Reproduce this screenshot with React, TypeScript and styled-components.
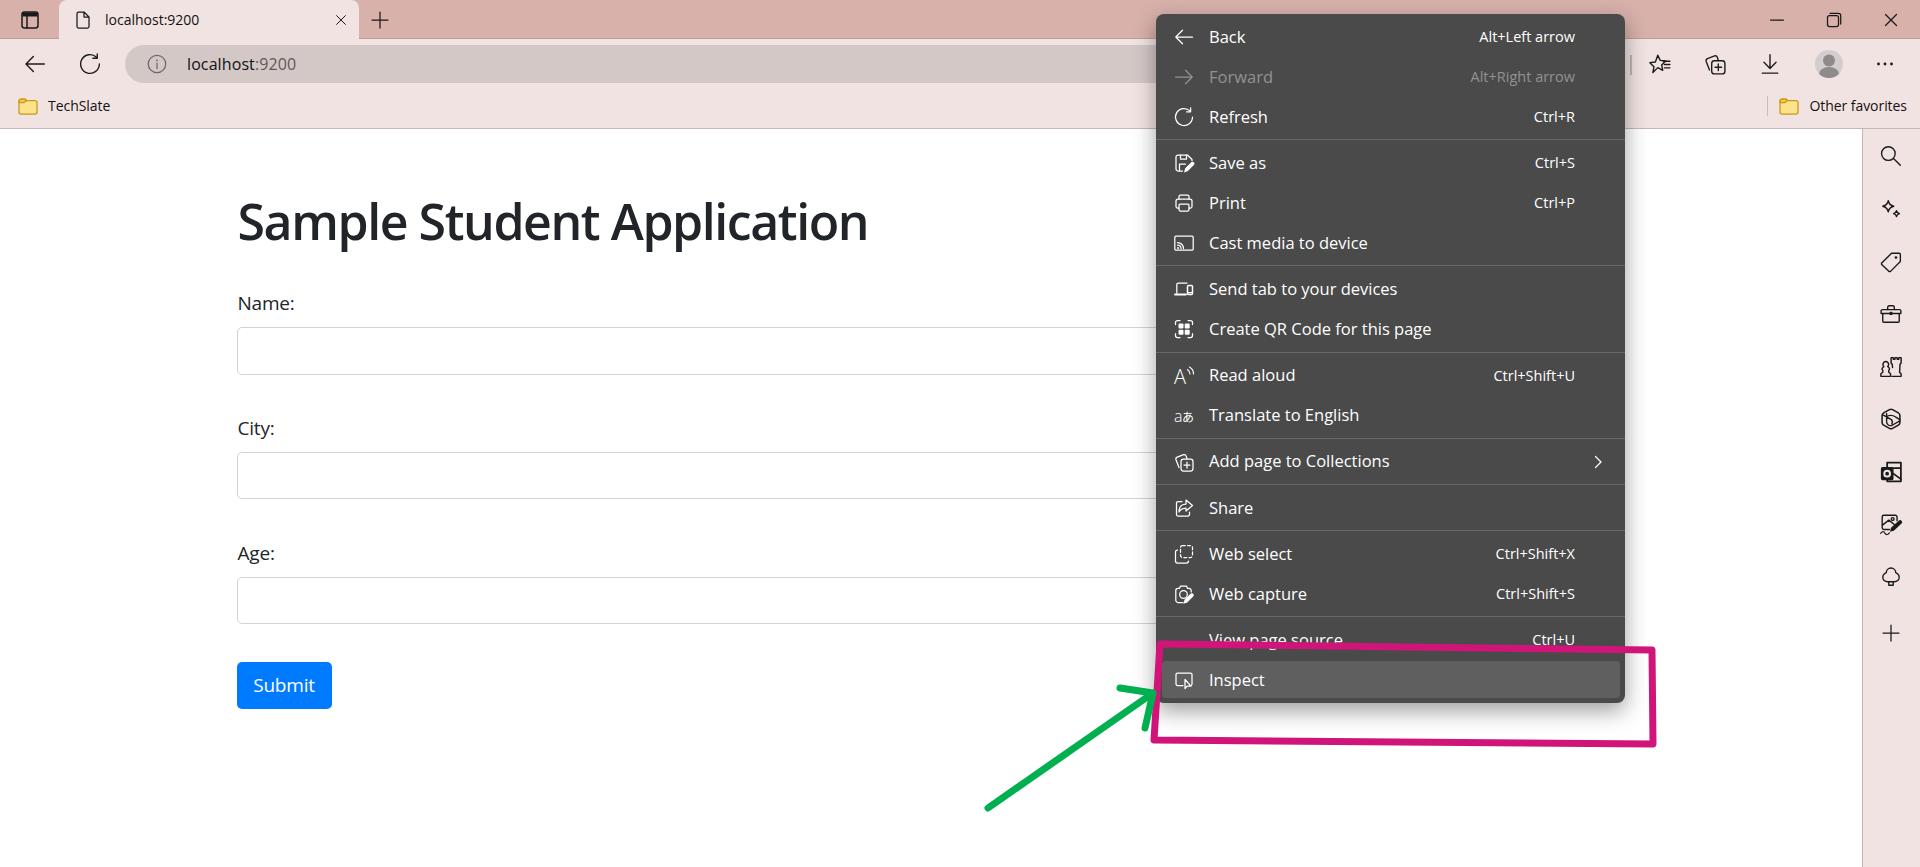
import React from 'react';
import styled, { createGlobalStyle } from 'styled-components';

const GlobalStyle = createGlobalStyle`
    html, body {
        margin: 0;
        padding: 0;
        background: #fff;
        font-family: "Open Sans", "Noto Sans", "Liberation Sans", sans-serif;
    }
    * { box-sizing: border-box; }
`

const Browser = styled.div`
    position: relative;
    width: 1920px;
    height: 867px;
    overflow: hidden;
    display: flex;
    flex-direction: column;
    color: #1a1a1a;
`

const TitleBar = styled.div`
    height: 39px;
    flex: none;
    display: flex;
    align-items: flex-end;
    background: #d7b1aa;
    box-shadow: inset 0 -1px 0 #bf9d97;
`
const TabToggle = styled.div`
    width: 59px;
    height: 39px;
    display: flex;
    align-items: center;
    justify-content: center;
`
const Tab = styled.div`
    width: 300px;
    height: 39px;
    padding: 0 10px 0 14px;
    display: flex;
    align-items: center;
    background: #f1e3e2;
    border-radius: 8px 8px 0 0;
`
const TabTitle = styled.span`
    flex: 1;
    margin-left: 12px;
    font-size: 14px;
    color: #111;
`
const NewTab = styled.div`
    width: 42px;
    height: 39px;
    display: flex;
    align-items: center;
    justify-content: center;
`
const WindowControls = styled.div`
    margin-left: auto;
    padding-right: 1px;
    display: flex;
`
const WindowButton = styled.div`
    width: 57px;
    height: 39px;
    display: flex;
    align-items: center;
    justify-content: center;
`

const Toolbar = styled.div`
    height: 45px;
    flex: none;
    padding: 6px 15px 0;
    display: flex;
    align-items: flex-start;
    gap: 15px;
    background: #f1e3e2;
`
const ToolButton = styled.div<{ $shift?: number }>`
    width: 40px;
    height: 38px;
    flex: none;
    margin-left: ${p => p.$shift || 0}px;
    display: flex;
    align-items: center;
    justify-content: center;
`
const AddressBar = styled.div`
    flex: 1;
    height: 38px;
    padding-left: 22px;
    display: flex;
    align-items: center;
    gap: 20px;
    background: #d4c8c7;
    border-radius: 19px 0 0 19px;
`
const AddressInfo = styled.div`
    color: #6d6766;
`
const AddressText = styled.span`
    font-size: 16px;
    letter-spacing: 0.1px;
    color: #111;
    span { color: #5d5757; }
`
const ToolSeparator = styled.div`
    width: 2px;
    height: 20px;
    flex: none;
    align-self: center;
    margin: 0 -7px 0 -8px;
    background: #c2b5b5;
`
const Avatar = styled.div`
    width: 28px;
    height: 28px;
    border-radius: 50%;
    background: #d3cecd;
    overflow: hidden;
    display: flex;
`

const BookmarksBar = styled.div`
    height: 45px;
    flex: none;
    padding: 0 13px 1px 18px;
    display: flex;
    align-items: center;
    background: #f1e3e2;
    border-bottom: 1px solid #c6b6b5;
`
const Bookmark = styled.div`
    display: flex;
    align-items: center;
    gap: 10px;
    font-size: 14px;
    letter-spacing: -0.05px;
    color: #111;
`
const BookmarkSeparator = styled.div`
    width: 1px;
    height: 20px;
    margin: 0 11px 0 auto;
    background: #c9bcbb;
`

const Body = styled.div`
    flex: 1;
    display: flex;
    min-height: 0;
`
const Content = styled.main`
    flex: 1;
    background: #fff;
`
const Container = styled.div`
    width: 1425px;
    margin: 0 auto;
    padding: 62px 19px 0 18px;
    color: #212529;
`
const Heading = styled.h1`
    margin: 0 0 37px 1px;
    font-size: 50px;
    line-height: 60px;
    font-weight: 600;
    letter-spacing: -1.42px;
`
const Field = styled.div`
    margin-bottom: 38.4px;
`
const FieldLabel = styled.label`
    display: block;
    width: fit-content;
    margin: 0 0 9px 1px;
    font-size: 19px;
    line-height: 30px;
    letter-spacing: -0.2px;
`
const TextInput = styled.input`
    display: block;
    width: 100%;
    height: 47.5px;
    border: 1px solid #ced4da;
    border-radius: 5px;
    background: #fff;
`
const SubmitButton = styled.button`
    width: 95px;
    height: 47px;
    margin-top: -1px;
    padding: 0;
    border: 0;
    border-radius: 5px;
    background: #007bff;
    color: #fff;
    font-family: inherit;
    font-size: 19px;
    letter-spacing: -0.2px;
`

const Sidebar = styled.aside`
    width: 58px;
    flex: none;
    padding: 1px 2px 0 0;
    display: flex;
    flex-direction: column;
    align-items: center;
    background: #f1e3e2;
    border-left: 1px solid #c6b6b5;
`
const SideButton = styled.div<{ $extra?: number }>`
    width: 40px;
    height: 52.6px;
    flex: none;
    margin-top: ${p => p.$extra || 0}px;
    display: flex;
    align-items: center;
    justify-content: center;
`

const Menu = styled.div`
    position: absolute;
    left: 1156px;
    top: 14px;
    width: 469px;
    height: 689px;
    background: #4a4a4a;
    border-radius: 8px;
    box-shadow: 0 8px 22px rgba(0, 0, 0, 0.38);
    color: #fff;
`
const MenuGroup = styled.div`
    padding: 3px 0 2.2px;
    & + & { border-top: 1px solid #676767; }
`
const MenuRow = styled.div<{ $disabled?: boolean; $active?: boolean }>`
    height: 40px;
    position: relative;
    display: flex;
    align-items: center;
    padding-left: 18px;
    padding-right: 50px;
    color: ${p => (p.$disabled ? '#929292' : '#fff')};
    &::before {
        content: '';
        position: absolute;
        display: ${p => (p.$active ? 'block' : 'none')};
        inset: 1px 5px 2px 6px;
        background: #5f5f5f;
        border-radius: 4px;
    }
`
const MenuIcon = styled.div`
    position: relative;
    width: 20px;
    height: 20px;
    margin-right: 15px;
    flex: none;
`
const MenuLabel = styled.span`
    position: relative;
    flex: 1;
    margin-top: -1.6px;
    font-size: 16.5px;
`
const Shortcut = styled.span`
    position: relative;
    margin-top: -1px;
    font-size: 14.5px;
`
const Chevron = styled.div`
    position: absolute;
    right: 17px;
    top: 10px;
    width: 20px;
    height: 20px;
`

const Annotation = styled.svg`
    position: absolute;
    left: 0;
    top: 0;
    width: 1920px;
    height: 867px;
    pointer-events: none;
`

const Glyph = styled.svg<{ $w?: number }>`
    display: block;
    overflow: visible;
    width: ${p => p.$w || 20}px;
    height: ${p => p.$w || 20}px;
    fill: none;
    stroke: currentColor;
    stroke-width: 1.25;
    stroke-linecap: round;
    stroke-linejoin: round;
`

const Solid = { fill: 'currentColor', stroke: 'none' }

const icons: Record<string, React.ReactNode> = {
  back: <path d="M18.5 10H2M8.5 3.2 1.8 10l6.7 6.8" />,
  forward: <path d="M1.5 10H18M11.5 3.2l6.7 6.8-6.7 6.8" />,
  refresh: (
    <>
      <path d="M18.5 10a8.5 8.5 0 1 1-2.6-6.1" />
      <path d="M16.6 .8v4h-4" />
    </>
  ),
  save: (
    <>
      <path d="M8.5 18H4a2 2 0 0 1-2-2V4a2 2 0 0 1 2-2h9.5L18 6.5v1.2" />
      <path d="M6.5 2v4h6V2M5.5 17.5V11h6" />
      <path {...Solid} d="M10 19.5l1.2-4.2 6-6a1.9 1.9 0 0 1 2.7 2.7l-6 6z" />
    </>
  ),
  print: (
    <>
      <path d="M5 6V3.5A1.5 1.5 0 0 1 6.5 2h7A1.5 1.5 0 0 1 15 3.5V6" />
      <path d="M5 15H3.500A1.500 1.500 0 0 1 2 13.500V8a2 2 0 0 1 2-2h12a2 2 0 0 1 2 2v5.500a1.500 1.500 0 0 1-1.500 1.500H15" />
      <rect x="5" y="11" width="10" height="7" rx="1.2" />
    </>
  ),
  cast: (
    <>
      <rect x=".8" y="3" width="18.400" height="14" rx="1" />
      <path d="M3.500 9.500a6 6 0 0 1 6 6M3.500 12a3.500 3.500 0 0 1 3.500 3.500" />
      <circle {...Solid} cx="4" cy="15" r="1" />
    </>
  ),
  devices: (
    <>
      <path d="M2.800 14V5.500A1.500 1.500 0 0 1 4.300 4H13" />
      <path d="M1 15.500h11" strokeWidth="1.8" />
      <rect x="13.500" y="6.500" width="5" height="9" rx="1" strokeWidth="1.5" />
      <path d="M14 13.500h4" />
    </>
  ),
  qr: (
    <>
      <path d="M1.500 5.500V3.500a2 2 0 0 1 2-2h2.500M14 1.500h2.500a2 2 0 0 1 2 2v2M18.500 14.500v2a2 2 0 0 1-2 2H14M6 18.500H3.500a2 2 0 0 1-2-2v-2" />
      <rect {...Solid} x="4.500" y="4.500" width="5" height="5" rx="1" />
      <rect {...Solid} x="10.700" y="4.500" width="5" height="5" rx="1" />
      <rect {...Solid} x="4.500" y="10.700" width="5" height="5" rx="1" />
      <rect {...Solid} x="10.700" y="10.700" width="5" height="5" rx="1" />
    </>
  ),
  read: (
    <>
      <text x="0" y="17.500" fontFamily="Open Sans, sans-serif" fontSize="20" fontWeight="300" fill="currentColor" stroke="none">A</text>
      <path d="M13.500 3.500a6 6 0 0 1 2.500 4.500M15.500 1a8 8 0 0 1 4 7" strokeWidth="1.1" />
    </>
  ),
  translate: (
    <text x="0" y="15.500" fontFamily="Noto Sans CJK JP, sans-serif" fill="currentColor" stroke="none">
      <tspan fontSize="16" fontWeight="300" fontFamily="Open Sans, sans-serif">a</tspan>
      <tspan fontSize="12" dx="-.5">あ</tspan>
    </text>
  ),
  collections: (
    <>
      <path d="M5 15.500 2 7.700a2 2 0 0 1 1.200-2.500L9.600 2.700a2 2 0 0 1 2.500 1.200L13 6.800" />
      <rect x="7" y="7" width="12" height="12" rx="2.500" />
      <path d="M13 10v6M10 13h6" />
    </>
  ),
  share: (
    <>
      <path d="M8 3.500H4A1.500 1.500 0 0 0 2.500 5v11.500A1.500 1.500 0 0 0 4 18h10a1.500 1.500 0 0 0 1.500-1.500V14" />
      <path d="M12 2l6.500 5.500L12 13v-3c-3.500 0-5.500 1-7 4 0-5 2.500-8 7-8z" />
    </>
  ),
  select: (
    <>
      <rect x="6.500" y="1.500" width="12" height="12" rx="2" strokeDasharray="2.800 2.300" />
      <path d="M3.500 6A2 2 0 0 0 1.500 8v9a2 2 0 0 0 2 2h9a2 2 0 0 0 2-2" />
    </>
  ),
  capture: (
    <>
      <path d="M9 18.500H4a2.200 2.200 0 0 1-2.200-2.200V6.500A2.200 2.200 0 0 1 4 4.300h1.500l1-2.300h6l1 2.300H15a2.200 2.200 0 0 1 2.200 2.200V8" />
      <circle cx="9.500" cy="10.500" r="3.800" />
      <path {...Solid} d="M9.500 19.800l1-4 6-6a1.900 1.900 0 0 1 2.700 2.700l-6 6z" />
    </>
  ),
  inspect: (
    <>
      <path d="M9 15.500H3.500A1.500 1.500 0 0 1 2 14V4.500A1.500 1.500 0 0 1 3.500 3h13A1.500 1.500 0 0 1 18 4.500V14a1.500 1.500 0 0 1-.8 1.300" />
      <path d="M11 9.500v9l2.200-2.400 3.800.1z" />
    </>
  ),
  chevron: <path d="M7.500 4.500 13 10l-5.500 5.500" />,
  sideToggle: (
    <>
      <rect x="2" y="2" width="16" height="16" rx="2.500" strokeWidth="1.500" />
      <path d="M2.500 6.500h15V3.500a1.500 1.500 0 0 0-1.500-1H4a1.500 1.500 0 0 0-1.500 1z" {...Solid} />
      <path d="M7 6.500V18" strokeWidth="1.500" />
    </>
  ),
  page: <path d="M4 3.500A1.500 1.500 0 0 1 5.500 2H11l5 5v9.500a1.500 1.500 0 0 1-1.500 1.500h-9A1.500 1.500 0 0 1 4 16.500zM11 2v5h5" />,
  close: <path d="M4.500 4.500l11 11M15.500 4.500l-11 11" />,
  plus: <path d="M10 2v16M2 10h16" />,
  info: (
    <>
      <circle cx="10" cy="10" r="8.700" />
      <path d="M10 9v5.500" />
      <circle {...Solid} cx="10" cy="6.300" r=".9" />
    </>
  ),
  minimize: <path d="M3.500 10h13" />,
  restore: (
    <>
      <rect x="3.500" y="5.500" width="11" height="11" rx="2" />
      <path d="M6 3.300h8.500a2.200 2.200 0 0 1 2.200 2.200V14" />
    </>
  ),
  star: (
    <>
      <path d="M9 2.500l2.200 4.700 5 .6-3.700 3.500 1 5-4.500-2.500L4.500 18.300l1-5.300L1.800 9.300l5-.6z" transform="translate(-1 -.5)" />
      <path d="M13 7.500h6M14 10.500h5M14 13.500h5" />
    </>
  ),
  download: <path d="M10 1.500V14M4.500 8.500 10 14l5.500-5.500M3 18.300h14" />,
  search: <path d="M12.500 12.500 18.500 18.500M13.800 7.800a6.200 6.200 0 1 1-12.400 0 6.200 6.200 0 0 1 12.400 0z" />,
  sparkle: (
    <>
      <path d="M7.500 2.500c.6 3 1.800 4.200 5 5-3.200.8-4.400 2-5 5-.6-3-1.800-4.200-5-5 3.200-.8 4.400-2 5-5z" />
      <path d="M15 11.500c.3 1.700 1 2.300 2.700 2.700-1.700.4-2.400 1-2.700 2.700-.3-1.700-1-2.300-2.700-2.700 1.700-.4 2.400-1 2.700-2.700z" />
    </>
  ),
  tag: (
    <>
      <path d="M1.800 11.500 10.500 3h7a1 1 0 0 1 1 1v6.500l-8.700 8.700a1.500 1.500 0 0 1-2 0l-6-5.700a1.300 1.300 0 0 1 0-2z" />
      <circle {...Solid} cx="14.500" cy="6.800" r="1.200" />
    </>
  ),
  toolbox: (
    <>
      <path d="M7 6V3.800A1.300 1.300 0 0 1 8.300 2.500h3.400A1.300 1.300 0 0 1 13 3.800V6" />
      <path d="M1 9.500V7.300A1.300 1.300 0 0 1 2.300 6h15.400A1.300 1.300 0 0 1 19 7.300v2.200H1zM2.500 9.500v7a1 1 0 0 0 1 1h13a1 1 0 0 0 1-1v-7" />
      <rect {...Solid} x="8.700" y="8" width="2.600" height="3" rx=".8" />
    </>
  ),
  chess: (
    <g strokeWidth="1.300">
      <path d="M10.800 18.500h8.400v-2.300l-1.400-1.200.4-7.500 1-1.200V1.500h-2.100v1.500h-1.500V1.500h-2v1.500h-1.500V1.500h-2v4.800l1 1.200.3 3" />
      <path d="M.8 18.500h8.800v-2.300L8 14.800c-.3-1.300 0-2.300.7-3-.2-1.200-.8-1.800-1.700-2.200a2.600 2.600 0 1 0-3.500 0c-1 .5-1.500 1.200-1.700 2.200.7.700 1 1.700.7 3L.8 16.200z" />
    </g>
  ),
  office: (
    <>
      <path d="M8.600 1.500a2.800 2.800 0 0 1 2.800 0l5.300 3a2.800 2.800 0 0 1 1.400 2.400v6.200a2.800 2.800 0 0 1-1.400 2.400l-5.300 3a2.800 2.800 0 0 1-2.800 0l-5.300-3a2.800 2.800 0 0 1-1.400-2.400V6.900a2.800 2.800 0 0 1 1.400-2.400z" strokeWidth="1.400" />
      <path d="M6 5v7.500a3.500 3.500 0 0 0 5 3.200l7-4M2.300 6l8 4.500a3.500 3.500 0 0 1 .5 4" />
      <path d="M6 8c1.500-1.500 5-2 8 0l4 2.500" />
    </>
  ),
  outlook: (
    <>
      <path d="M6.500 6V1.500h12.500v17h-12.500v-1M6.500 6.500H19" strokeWidth="1.600" />
      <path d="M11.500 11l7.500 5.500" strokeWidth="1.600" />
      <rect {...Solid} x=".8" y="5.500" width="11.500" height="12" rx="1.500" />
      <circle cx="6.500" cy="11.500" r="2.600" stroke="#f1e3e2" strokeWidth="1.800" />
    </>
  ),
  drawing: (
    <>
      <path d="M8.500 15H3.500a1.500 1.500 0 0 1-1.500-1.500V3.500A1.500 1.500 0 0 1 3.500 2h10.500A1.500 1.500 0 0 1 15.500 3.500V7" />
      <path d="M2.300 11 8 6.500l5 4" />
      <circle cx="11.500" cy="5.500" r="1.300" />
      <path {...Solid} d="M9 17l1-3.500 7-6.500a1.800 1.800 0 0 1 2.600 2.600l-7 6.500z" />
      <path d="M.5 18.500c2-2 3-2 4 0s3 1 4-.5" strokeWidth="1.100" />
    </>
  ),
  tree: (
    <>
      <path d="M10 1.800c2.500 0 4.300 2 4.300 4.200 2.300 1 3.500 3 3 5.300-.5 2-2.200 3-4.300 3H7c-2.100 0-3.800-1-4.300-3-.5-2.300.7-4.300 3-5.300 0-2.200 1.800-4.200 4.300-4.200z" />
      <path d="M8 14.300v3.200h4v-3.200" />
    </>
  ),
}

const Icon = ({ name, size }: { name: string; size?: number }) => (
  <Glyph $w={size} viewBox="0 0 20 20">{icons[name]}</Glyph>
)

const Folder = () => (
  <Glyph $w={20} viewBox="0 0 20 20">
    <path fill="#fde28c" stroke="#c9981d" d="M1 5a2 2 0 0 1 2-2h4l1.500 1.500H17a2 2 0 0 1 2 2V16a2 2 0 0 1-2 2H3a2 2 0 0 1-2-2z" />
    <path fill="#f6c945" stroke="#c9981d" d="M1 5a2 2 0 0 1 2-2h4l1.500 1.500L6 6.500H1z" />
  </Glyph>
)

type Item = { icon?: string; label: string; keys?: string; disabled?: boolean; more?: boolean; active?: boolean }

const menuGroups: Item[][] = [
  [
    { icon: 'back', label: 'Back', keys: 'Alt+Left arrow' },
    { icon: 'forward', label: 'Forward', keys: 'Alt+Right arrow', disabled: true },
    { icon: 'refresh', label: 'Refresh', keys: 'Ctrl+R' },
  ],
  [
    { icon: 'save', label: 'Save as', keys: 'Ctrl+S' },
    { icon: 'print', label: 'Print', keys: 'Ctrl+P' },
    { icon: 'cast', label: 'Cast media to device' },
  ],
  [
    { icon: 'devices', label: 'Send tab to your devices' },
    { icon: 'qr', label: 'Create QR Code for this page' },
  ],
  [
    { icon: 'read', label: 'Read aloud', keys: 'Ctrl+Shift+U' },
    { icon: 'translate', label: 'Translate to English' },
  ],
  [{ icon: 'collections', label: 'Add page to Collections', more: true }],
  [{ icon: 'share', label: 'Share' }],
  [
    { icon: 'select', label: 'Web select', keys: 'Ctrl+Shift+X' },
    { icon: 'capture', label: 'Web capture', keys: 'Ctrl+Shift+S' },
  ],
  [
    { label: 'View page source', keys: 'Ctrl+U' },
    { icon: 'inspect', label: 'Inspect', active: true },
  ],
]

const sideItems = ['search', 'sparkle', 'tag', 'toolbox', 'chess', 'office', 'outlook', 'drawing', 'tree']

const App = () => {
  return (
    <Browser>
      <GlobalStyle />
      <TitleBar>
        <TabToggle><Icon name="sideToggle" size={20} /></TabToggle>
        <Tab>
          <Icon name="page" size={20} />
          <TabTitle>localhost:9200</TabTitle>
          <Icon name="close" size={16} />
        </Tab>
        <NewTab><Icon name="plus" size={20} /></NewTab>
        <WindowControls>
          <WindowButton><Icon name="minimize" size={20} /></WindowButton>
          <WindowButton><Icon name="restore" size={20} /></WindowButton>
          <WindowButton><Icon name="close" size={20} /></WindowButton>
        </WindowControls>
      </TitleBar>

      <Toolbar>
        <ToolButton><Icon name="back" size={22} /></ToolButton>
        <ToolButton><Icon name="refresh" size={22} /></ToolButton>
        <AddressBar>
          <AddressInfo><Icon name="info" size={20} /></AddressInfo>
          <AddressText>localhost<span>:9200</span></AddressText>
        </AddressBar>
        <ToolSeparator />
        <ToolButton><Icon name="star" size={22} /></ToolButton>
        <ToolButton><Icon name="collections" size={22} /></ToolButton>
        <ToolButton><Icon name="download" size={22} /></ToolButton>
        <ToolButton $shift={4}>
          <Avatar>
            <svg viewBox="0 0 28 28" width="28" height="28">
              <circle cx="14" cy="10.500" r="6" fill="#8e8b8a" />
              <ellipse cx="14" cy="24" rx="10" ry="7" fill="#8e8b8a" />
            </svg>
          </Avatar>
        </ToolButton>
        <ToolButton $shift={1}>
          <svg viewBox="0 0 20 20" width="20" height="20">
            <circle cx="3.500" cy="10" r="1.400" fill="#1a1a1a" />
            <circle cx="10" cy="10" r="1.400" fill="#1a1a1a" />
            <circle cx="16.500" cy="10" r="1.400" fill="#1a1a1a" />
          </svg>
        </ToolButton>
      </Toolbar>

      <BookmarksBar>
        <Bookmark><Folder />TechSlate</Bookmark>
        <BookmarkSeparator />
        <Bookmark><Folder />Other favorites</Bookmark>
      </BookmarksBar>

      <Body>
        <Content>
          <Container>
            <Heading>Sample Student Application</Heading>
            <Field>
              <FieldLabel>Name:</FieldLabel>
              <TextInput />
            </Field>
            <Field>
              <FieldLabel>City:</FieldLabel>
              <TextInput />
            </Field>
            <Field>
              <FieldLabel>Age:</FieldLabel>
              <TextInput />
            </Field>
            <SubmitButton>Submit</SubmitButton>
          </Container>
        </Content>
        <Sidebar>
          {sideItems.map(name => (
            <SideButton key={name}><Icon name={name} size={22} /></SideButton>
          ))}
          <SideButton $extra={3}><Icon name="plus" size={20} /></SideButton>
        </Sidebar>
      </Body>

      <Menu>
        {menuGroups.map((group, i) => (
          <MenuGroup key={i}>
            {group.map(item => (
              <MenuRow key={item.label} $disabled={item.disabled} $active={item.active}>
                <MenuIcon>{item.icon && <Icon name={item.icon} />}</MenuIcon>
                <MenuLabel>{item.label}</MenuLabel>
                {item.keys && <Shortcut>{item.keys}</Shortcut>}
                {item.more && <Chevron><Icon name="chevron" size={20} /></Chevron>}
              </MenuRow>
            ))}
          </MenuGroup>
        ))}
      </Menu>

      <Annotation viewBox="0 0 1920 867">
        <path d="M1160 644 L1652 650 L1653 744 L1154 740 Z" fill="none" stroke="#d0147a" strokeWidth="7" strokeLinejoin="round" />
        <path d="M988 808 L1153 693 M1120 688 L1153 693 L1145 728" fill="none" stroke="#00b050" strokeWidth="7" strokeLinecap="round" strokeLinejoin="round" />
      </Annotation>
    </Browser>
  )
}

export default App;
